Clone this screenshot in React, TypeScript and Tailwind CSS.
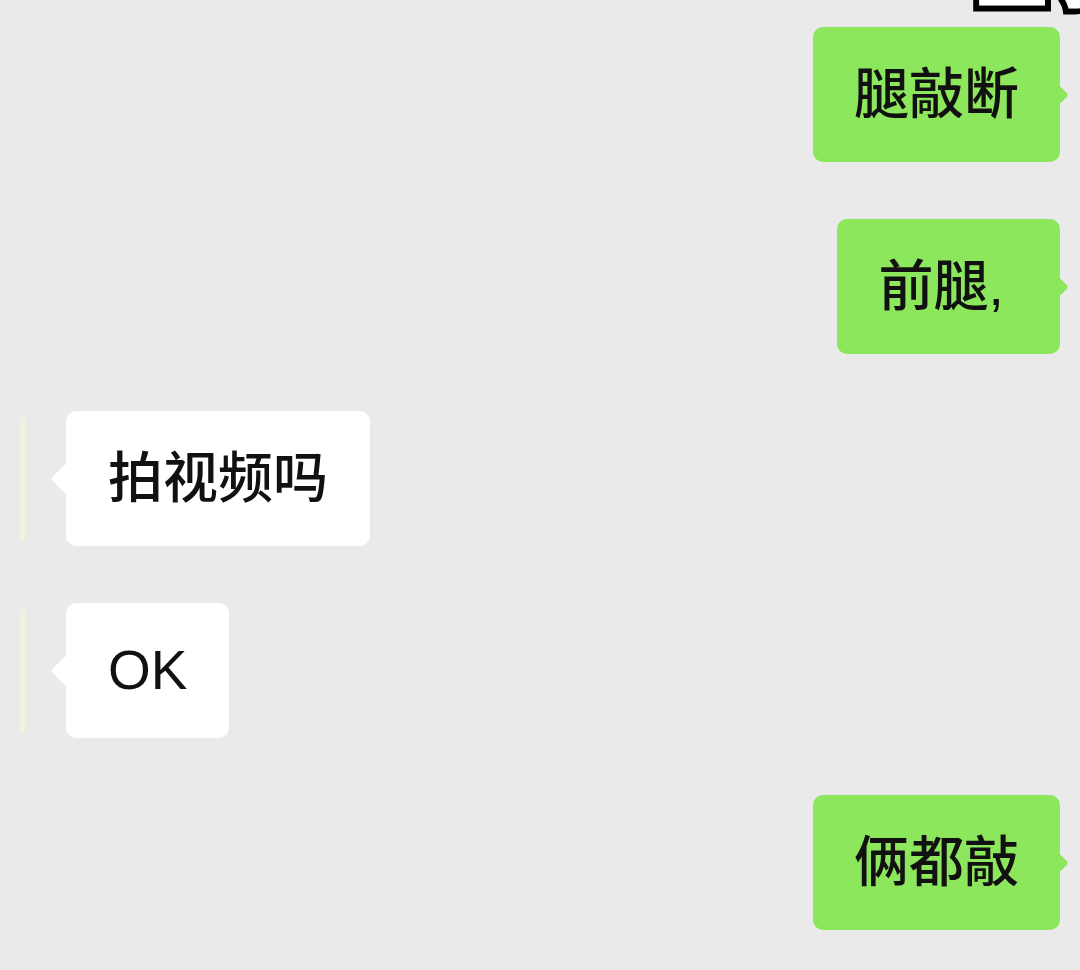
import React from 'react'

type Message = {
  id: number
  from: 'me' | 'them'
  text: string
}

const messages: Message[] = [
  { id: 1, from: 'me', text: '腿敲断' },
  { id: 2, from: 'me', text: '前腿, ' },
  { id: 3, from: 'them', text: '拍视频吗' },
  { id: 4, from: 'them', text: 'OK' },
  { id: 5, from: 'me', text: '俩都敲' },
]

const font = "font-['Liberation_Sans','Noto_Sans_CJK_SC',sans-serif]"

function Bubble({ msg }: { msg: Message }) {
  const mine = msg.from === 'me'

  if (mine) {
    return (
      <div className="flex justify-end pr-5">
        <div className="relative flex h-[135px] items-center rounded-[10px] bg-[#8de75c] px-[41px]">
          {/* tail */}
          <div className="absolute right-[-6px] top-1/2 h-[14px] w-[14px] -translate-y-1/2 rotate-45 rounded-[4px] bg-[#8de75c]" />
          <span className={`relative whitespace-pre text-[55px] font-medium leading-none text-[#111] ${font}`}>
            {msg.text}
          </span>
        </div>
      </div>
    )
  }

  return (
    <div className="flex items-center">
      {/* edge of the avatar, mostly cut off */}
      <div className="ml-5 h-[124px] w-[5px] bg-[#f2f1df]" />
      <div className="relative ml-[41px] flex h-[135px] items-center rounded-[10px] bg-white px-[42px]">
        <div className="absolute left-[-11px] top-1/2 h-[22px] w-[22px] -translate-y-1/2 rotate-45 rounded-[3px] bg-white" />
        <span className={`relative text-[55px] font-medium leading-none text-[#111] ${font}`}>{msg.text}</span>
      </div>
    </div>
  )
}

export default function App() {
  return (
    <div className="relative h-[970px] w-[1080px] overflow-hidden bg-[#eaeaea]">
      {/* caption strip peeking in at the top */}
      <span
        className={`absolute right-[-40px] top-[-60px] text-[72px] font-bold leading-none text-white [-webkit-text-stroke:12px_black] [paint-order:stroke_fill] ${font}`}
      >
        正了
      </span>

      <div className="flex flex-col gap-[57px] pt-[27px]">
        {messages.map((m) => (
          <Bubble key={m.id} msg={m} />
        ))}
      </div>
    </div>
  )
}
